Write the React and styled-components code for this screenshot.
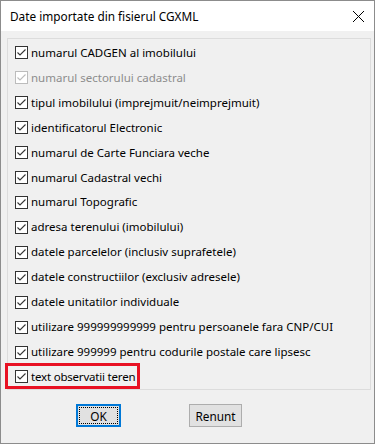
import React from "react";
import styled, { createGlobalStyle } from "styled-components";

const Global = createGlobalStyle`
  html, body { margin: 0; padding: 0; background: #ffffff; }
  body { font-family: "Noto Sans", "Open Sans", sans-serif; font-size: 11.5px; }
`;

const Window = styled.div`
  width: 375px;
  height: 444px;
  box-sizing: border-box;
  border: 1px solid #8c8c8c;
  background: #f0f0f0;
  display: flex;
  flex-direction: column;
`;

const TitleBar = styled.div`
  height: 30px;
  background: #ffffff;
  display: flex;
  align-items: center;
  justify-content: space-between;
  padding-left: 9px;
  padding-right: 8px;
  color: #000;
  font-size: 11.8px;
`;

const Close = styled.div`
  width: 13px;
  height: 13px;
  display: flex;
  margin-top: 1px;
  margin-right: 1px;
`;

const Body = styled.div`
  flex: 1;
  padding: 7px 3px 0 6px;
  display: flex;
  flex-direction: column;
`;

const Panel = styled.div`
  border: 1px solid #dcdcdc;
  height: 352px;
  box-sizing: border-box;
  padding: 1px 0 0 7px;
  display: flex;
  flex-direction: column;
`;

const Row = styled.label`
  position: relative;
  height: 25px;
  display: flex;
  align-items: center;
  gap: 3px;
  color: ${(p) => (p.$disabled ? "#8d8d8d" : "#000")};
  width: max-content;
  letter-spacing: ${(p) => (p.$highlight ? "-0.2px" : "normal")};
  &::after {
    content: "";
    display: ${(p) => (p.$highlight ? "block" : "none")};
    position: absolute;
    left: -10px;
    right: -5px;
    top: -1px;
    bottom: 0px;
    border: 3px solid #e81123;
  }
`;

const Box = styled.span`
  width: 13px;
  height: 13px;
  box-sizing: border-box;
  border: 1px solid ${(p) => (p.$disabled ? "#bcbcbc" : "#333333")};
  background: #ffffff;
  display: flex;
  flex-shrink: 0;
  margin-top: 1px;
`;

const Buttons = styled.div`
  display: flex;
  padding: 14px 0 0 69px;
  gap: 68px;
`;

const Button = styled.button`
  font-family: inherit;
  font-size: 11.8px;
  height: 23px;
  width: ${(p) => p.$w}px;
  box-sizing: border-box;
  background: #e1e1e1;
  color: #000;
  border: ${(p) => (p.$default ? "2px solid #0078d7" : "1px solid #adadad")};
  padding: 0;
  position: relative;
  display: flex;
  align-items: center;
  justify-content: center;
  &::before {
    content: "";
    display: ${(p) => (p.$default ? "block" : "none")};
    position: absolute;
    inset: 1px;
    border: 1px dotted #000;
  }
`;

const Check = ({ disabled }) => (
  <svg width="11" height="11" viewBox="0 0 11 11">
    <polyline
      points="1.5,5.5 4,8 9.5,2.5"
      fill="none"
      stroke={disabled ? "#bcbcbc" : "#333333"}
      strokeWidth="1.1"
    />
  </svg>
);

const items = [
  { t: "numarul CADGEN al imobilului" },
  { t: "numarul sectorului cadastral", d: true },
  { t: "tipul imobilului (imprejmuit/neimprejmuit)" },
  { t: "identificatorul Electronic" },
  { t: "numarul de Carte Funciara veche" },
  { t: "numarul Cadastral vechi" },
  { t: "numarul Topografic" },
  { t: "adresa terenului (imobilului)" },
  { t: "datele parcelelor (inclusiv suprafetele)" },
  { t: "datele constructiilor (exclusiv adresele)" },
  { t: "datele unitatilor individuale" },
  { t: "utilizare 999999999999 pentru persoanele fara CNP/CUI" },
  { t: "utilizare 999999 pentru codurile postale care lipsesc" },
  { t: "text observatii teren", h: true },
];

export default function App() {
  return (
    <>
      <Global />
      <Window>
        <TitleBar>
          <span>Date importate din fisierul CGXML</span>
          <Close>
            <svg width="13" height="13" viewBox="0 0 13 13">
              <path d="M1 1 L12 12 M12 1 L1 12" stroke="#000" strokeWidth="1" fill="none" />
            </svg>
          </Close>
        </TitleBar>
        <Body>
          <Panel>
            {items.map((it) => (
              <Row key={it.t} $disabled={it.d} $highlight={it.h}>
                <Box $disabled={it.d}>
                  <Check disabled={it.d} />
                </Box>
                <span>{it.t}</span>
              </Row>
            ))}
          </Panel>
          <Buttons>
            <Button $default $w={45}>OK</Button>
            <Button $w={53}>Renunt</Button>
          </Buttons>
        </Body>
      </Window>
    </>
  );
}
